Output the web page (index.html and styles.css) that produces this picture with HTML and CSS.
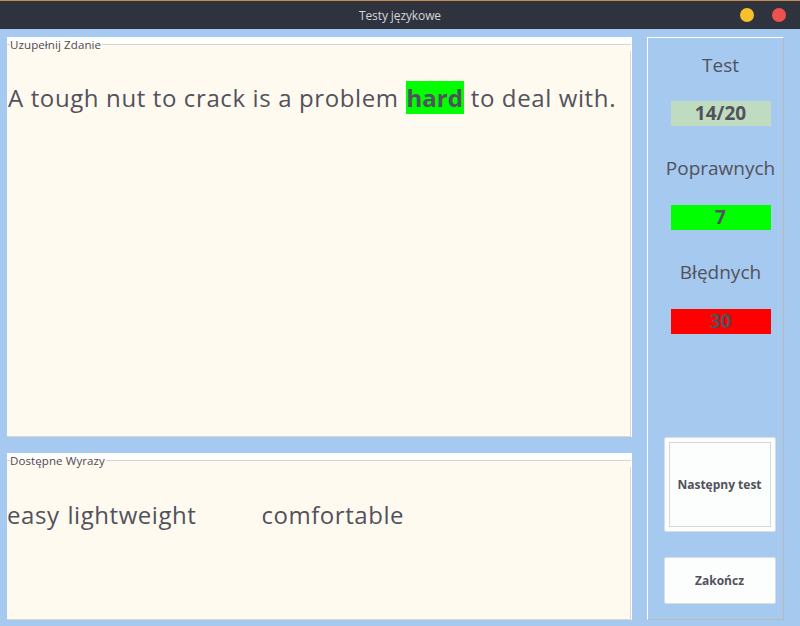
FILE: index.html
```html
<!DOCTYPE html>
<html>
<head>
<meta charset="utf-8">
<link rel="stylesheet" href="styles.css">
</head>
<body>
<div class="window">
  <div class="titlebar">
    <span class="title">Testy językowe</span>
    <div class="controls">
      <span class="dot yellow"></span>
      <span class="dot red"></span>
    </div>
  </div>
  <div class="content">
    <div class="left">
      <div class="panel top-panel">
        <div class="legend"><span class="legend-text">Uzupełnij Zdanie</span></div>
        <div class="panel-body">
          <p class="sentence">A tough nut to crack is a problem <span class="answer">hard</span> to deal with.</p>
        </div>
      </div>
      <div class="panel bottom-panel">
        <div class="legend"><span class="legend-text">Dostępne Wyrazy</span></div>
        <div class="panel-body">
          <div class="words">
            <span class="word w-easy">easy</span>
            <span class="word w-light">lightweight</span>
            <span class="word">comfortable</span>
          </div>
        </div>
      </div>
    </div>
    <div class="side">
      <div class="stat-label first">Test</div>
      <div class="stat-box gray first-box">14/20</div>
      <div class="stat-label">Poprawnych</div>
      <div class="stat-box green">7</div>
      <div class="stat-label">Błędnych</div>
      <div class="stat-box red-box">30</div>
      <button class="btn btn-next"><span class="btn-inner">Następny test</span></button>
      <button class="btn btn-end">Zakończ</button>
    </div>
  </div>
</div>
</body>
</html>
```

FILE: styles.css
```css
* { box-sizing: border-box; }
html, body { margin: 0; padding: 0; }
body {
  width: 800px;
  height: 626px;
  overflow: hidden;
  font-family: "Open Sans", "Noto Sans", "DejaVu Sans", sans-serif;
  color: #52525c;
  background: #a6c9ef;
}
.window {
  width: 800px;
  height: 626px;
  display: flex;
  flex-direction: column;
  background: #a6c9ef;
}
.titlebar {
  height: 29px;
  flex: 0 0 29px;
  background: #2f333e;
  border-top: 1px solid #c98a4e;
  display: flex;
  align-items: center;
  justify-content: center;
  position: relative;
}
.title {
  color: #d4d6da;
  font-size: 12px;
  letter-spacing: -0.1px;
}
.controls {
  position: absolute;
  right: 14px;
  top: 7px;
  display: flex;
  gap: 18px;
}
.dot {
  width: 14px;
  height: 14px;
  border-radius: 50%;
  display: block;
}
.dot.yellow { background: #f7c12c; }
.dot.red { background: #ef5050; }

.content {
  flex: 1;
  display: flex;
  padding: 8px 16px 6px 7px;
  gap: 15px;
}
.left {
  width: 625px;
  display: flex;
  flex-direction: column;
  gap: 16px;
}
.panel {
  background: #ffffff;
  display: flex;
  flex-direction: column;
}
.top-panel { height: 400px; }
.bottom-panel { height: 167px; }
.legend {
  height: 14px;
  flex: 0 0 14px;
  display: flex;
  align-items: center;
  background: linear-gradient(#ffffff 7px, #fffaf0 7px);
  font-size: 11.5px;
  letter-spacing: 0.1px;
  color: #4a4a55;
  margin-right: 1px;
  position: relative;
}
.legend::before {
  content: "";
  width: 3px;
  height: 1px;
  background: #d6d6d6;
}
.legend::after {
  content: "";
  flex: 1;
  height: 1px;
  background: #d6d6d6;
  margin-left: 1px;
}
.legend-text {
  line-height: 14px;
  padding-top: 1px;
}
.panel-body {
  flex: 1;
  background: #fffaf0;
  border-right: 1px solid #d6d6d6;
  border-bottom: 1px solid #d6d6d6;
  margin-right: 1px;
}
.sentence {
  margin: 0;
  padding-top: 31px;
  padding-left: 1px;
  font-size: 24px;
  letter-spacing: 0.62px;
  line-height: 32px;
  white-space: nowrap;
}
.answer {
  background: #00ff00;
  font-weight: bold;
  letter-spacing: 0;
  padding: 0 1px;
}
.words {
  padding-top: 32px;
  display: flex;
  font-size: 24px;
  letter-spacing: 0.55px;
  line-height: 32px;
  white-space: nowrap;
}
.w-easy { margin-right: 8px; }
.w-light { margin-right: 65px; }

.side {
  width: 137px;
  border-top: 1px solid #ffffff;
  border-left: 1px solid #ffffff;
  border-right: 1px solid #b9b9b9;
  border-bottom: 1px solid #b9b9b9;
  display: flex;
  flex-direction: column;
  align-items: center;
  padding-left: 10px;
  padding-bottom: 15px;
}
.stat-label {
  font-size: 19px;
  line-height: 24px;
  margin-top: 30px;
}
.stat-label.first { margin-top: 15px; }
.stat-box {
  width: 100px;
  height: 25px;
  margin-top: 25px;
  font-weight: bold;
  font-size: 19px;
  line-height: 25px;
  text-align: center;
}
.stat-box.first-box { margin-top: 24px; }
.stat-box.gray { background: #c0dcc0; }
.stat-box.green { background: #00ff00; }
.stat-box.red-box { background: #ff0000; }
.btn {
  width: 112px;
  background: #fcfdfd;
  border: 1px solid #dcdde2;
  border-radius: 2px;
  font-family: inherit;
  font-weight: bold;
  font-size: 12px;
  color: #52525c;
  padding: 0;
  margin-left: -2px;
  display: flex;
  align-items: center;
  justify-content: center;
}
.btn-next {
  height: 95px;
  margin-top: auto;
  padding: 4px;
}
.btn-inner {
  flex: 1;
  align-self: stretch;
  border: 1px solid #d6d6e0;
  display: flex;
  align-items: center;
  justify-content: center;
}
.btn-end {
  height: 47px;
  margin-top: 25px;
}
```
